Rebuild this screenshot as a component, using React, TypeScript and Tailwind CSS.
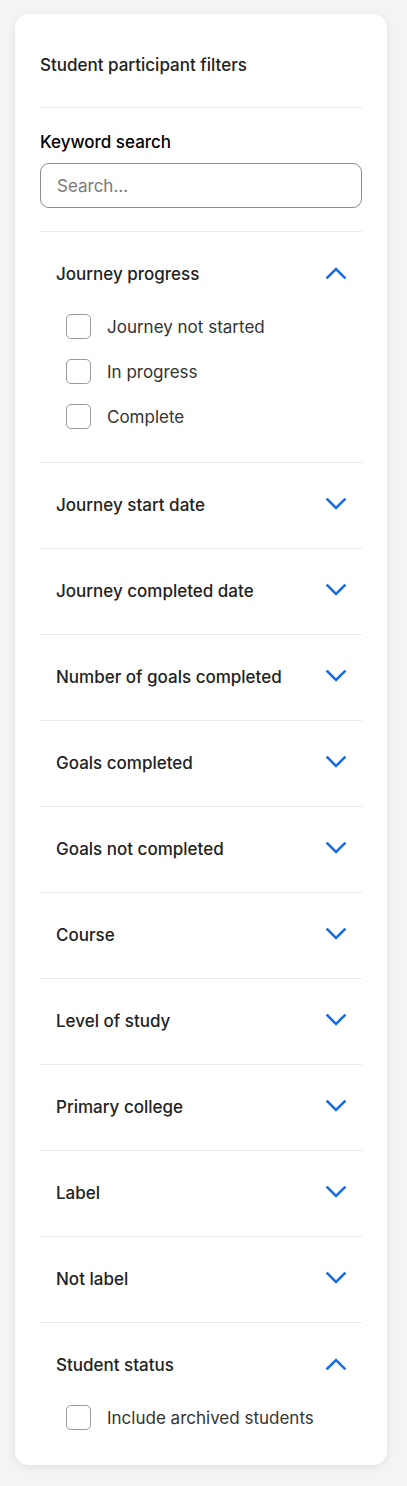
import { useState } from "react";

type Section = {
  title: string;
  options?: string[];
  open?: boolean;
};

const sections: Section[] = [
  { title: "Journey progress", open: true, options: ["Journey not started", "In progress", "Complete"] },
  { title: "Journey start date" },
  { title: "Journey completed date" },
  { title: "Number of goals completed" },
  { title: "Goals completed" },
  { title: "Goals not completed" },
  { title: "Course" },
  { title: "Level of study" },
  { title: "Primary college" },
  { title: "Label" },
  { title: "Not label" },
  { title: "Student status", open: true, options: ["Include archived students"] },
];

const Chevron = ({ up }: { up: boolean }) => (
  <svg width="22" height="14" viewBox="0 0 22 14" fill="none" className="-mt-[3px] shrink-0">
    <path
      d={up ? "M2.5 11.5 L11 3 L19.5 11.5" : "M2.5 2.5 L11 11 L19.5 2.5"}
      stroke="#1a6de5"
      strokeWidth={2.6}
      strokeLinecap="square"
      strokeLinejoin="miter"
    />
  </svg>
);

const FilterSection = ({ section, last }: { section: Section; last: boolean }) => {
  const [open, setOpen] = useState(!!section.open);

  return (
    <div className={last ? "" : "border-b border-[#ebebeb]"}>
      <button
        type="button"
        onClick={() => setOpen(!open)}
        className="flex w-full items-center justify-between pl-4 pr-[15px] pt-[30px] text-left"
      >
        <span className="text-[17px] leading-6 font-medium text-[#222]">{section.title}</span>
        <Chevron up={open} />
      </button>
      {open && section.options ? (
        <div className={`flex flex-col gap-[20px] pl-[26px] pt-[28px] ${last ? "pb-[35px]" : "pb-[33px]"}`}>
          {section.options.map((opt) => (
            <label key={opt} className="flex h-[25px] items-center gap-[16px]">
              <span className="h-[25px] w-[25px] rounded-[5px] border border-[#9a9a9a] bg-white" />
              <span className="text-[17px] leading-6 text-[#333]">{opt}</span>
            </label>
          ))}
        </div>
      ) : (
        <div className="h-[31px]" />
      )}
    </div>
  );
};

export default function App() {
  return (
    <div className="min-h-[1486px] bg-[#f4f4f4] pl-[15px] pr-[20px] pt-[14px] pb-[21px]" style={{ fontFamily: "Inter, 'Noto Sans', sans-serif" }}>
      <div className="rounded-[14px] bg-white px-[25px] pt-[39px] shadow-[0_2px_10px_rgba(0,0,0,0.08)]">
        <h2 className="text-[17px] leading-6 font-medium text-[#222]">Student participant filters</h2>
        <div className="mt-[30px] border-t border-[#ebebeb]" />

        <div className="border-b border-[#ebebeb] pt-[22px] pb-[23px]">
          <div className="text-[17px] leading-6 font-medium text-black">Keyword search</div>
          <input
            type="text"
            placeholder="Search..."
            className="mt-[9px] h-[45px] w-full rounded-[9px] border border-[#8c8c8c] px-4 text-[17px] text-[#222] placeholder:text-[#7a7a7a] outline-none"
          />
        </div>

        {sections.map((s, i) => (
          <FilterSection key={s.title} section={s} last={i === sections.length - 1} />
        ))}
      </div>
    </div>
  );
}
